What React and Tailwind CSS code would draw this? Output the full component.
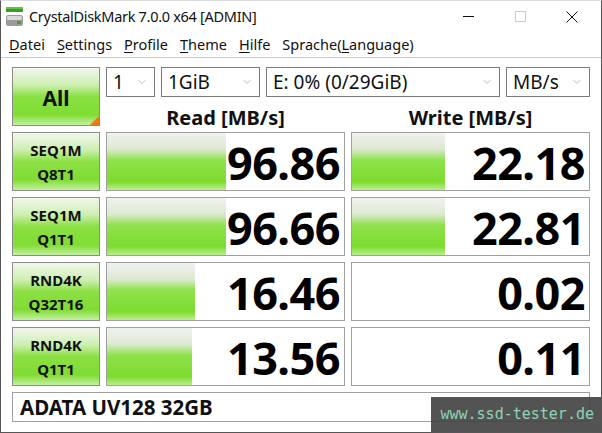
import { ChevronDown } from 'lucide-react'

const rows = [
  { a: 'SEQ1M', b: 'Q8T1', read: '96.86', rw: 119, write: '22.18', ww: 93 },
  { a: 'SEQ1M', b: 'Q1T1', read: '96.66', rw: 119, write: '22.81', ww: 93 },
  { a: 'RND4K', b: 'Q32T16', read: '16.46', rw: 88, write: '0.02', ww: 0 },
  { a: 'RND4K', b: 'Q1T1', read: '13.56', rw: 85, write: '0.11', ww: 0 },
]

const font = { fontFamily: '"Noto Sans", "Open Sans", sans-serif' }

function Btn({ children, className = '' }) {
  return (
    <div className={`relative border border-[#8c8c8c] bg-[linear-gradient(to_bottom,#f2f7ee_0%,#cdeeb0_30%,#8be043_50%,#80dc33_82%,#c3f0a0_100%)] flex flex-col items-center justify-center text-[#111] font-bold ${className}`}>
      {children}
    </div>
  )
}

function Cell({ value, width }) {
  return (
    <div className="relative border border-[#a0a0a0] bg-white h-[59px] flex items-center justify-end pr-[4px]">
      {width > 0 && (
        <div
          className="absolute left-0 top-0 bottom-0 bg-[linear-gradient(to_bottom,#f0f2ee_0%,#dde9d2_28%,#8ee24a_48%,#7edb2f_85%,#b9ee8e_100%)]"
          style={{ width }}
        />
      )}
      <span className="relative text-[45px] font-bold leading-none text-black tracking-[-0.5px] translate-y-[1px]">{value}</span>
    </div>
  )
}

function Combo({ w, label }) {
  return (
    <div className={`${w} h-[30px] border border-[#7a7a7a] bg-white flex items-center justify-between pl-[6px] pr-[6px]`}>
      <span className="text-[19px] text-[#111] leading-none">{label}</span>
      <ChevronDown size={12} strokeWidth={1.2} className="text-[#888]" />
    </div>
  )
}

const U = ({ c }) => <span className="underline underline-offset-2 decoration-1">{c}</span>

export default function App() {
  return (
    <div className="relative w-[602px] h-[433px] bg-white border border-[#555] border-t-[#ddd] overflow-hidden" style={font}>
      {/* title bar */}
      <div className="h-[31px] flex items-center">
        <svg width="20" height="22" viewBox="0 0 20 22" className="ml-[4px] mr-[4px]">
          <rect x="1" y="1" width="17" height="5" fill="#3c9b2a" />
          <rect x="1" y="1" width="17" height="2" fill="#5cc43e" />
          <rect x="1" y="9" width="17" height="11" rx="2.5" fill="#9a9a9a" />
          <rect x="2" y="10" width="15" height="4" rx="1.5" fill="#d8d8d8" />
          <rect x="12" y="15" width="4" height="3" fill="#3fa52b" />
        </svg>
        <span className="text-[14.5px] text-[#111] tracking-[-0.3px]">CrystalDiskMark 7.0.0 x64 [ADMIN]</span>
        <div className="ml-auto flex items-center h-full">
          <div className="w-[46px] flex justify-center"><div className="w-[11px] h-px bg-[#111]" /></div>
          <div className="w-[46px] flex justify-center ml-[6px]"><div className="w-[11px] h-[11px] border border-[#ccc]" /></div>
          <div className="w-[46px] flex justify-center ml-[6px] mr-[6px]">
            <svg width="12" height="12" viewBox="0 0 12 12"><path d="M0.5 0.5L11.5 11.5M11.5 0.5L0.5 11.5" stroke="#111" strokeWidth="1" /></svg>
          </div>
        </div>
      </div>
      {/* menu */}
      <div className="h-[26px] flex items-center text-[14.5px] text-[#111] border-b border-[#c8c8c8] pl-[8px] gap-[12px]">
        <span><U c="D" />atei</span>
        <span><U c="S" />ettings</span>
        <span><U c="P" />rofile</span>
        <span><U c="T" />heme</span>
        <span><U c="H" />ilfe</span>
        <span>Sprache(<U c="L" />anguage)</span>
      </div>
      {/* body */}
      <div className="pl-[11px] pt-[9px] grid grid-cols-[88px_239px_239px] gap-[6px]">
        <Btn className="h-[59px] text-[21px]">
          <span className="translate-y-[2px]">All</span>
          <div className="absolute right-0 bottom-0 w-0 h-0 border-l-[9px] border-l-transparent border-b-[9px] border-b-[#f07818]" />
        </Btn>
        <div className="col-span-2 flex flex-col">
          <div className="flex gap-[6px]">
            <Combo w="w-[49px]" label="1" />
            <Combo w="w-[99px]" label="1GiB" />
            <Combo w="w-[234px]" label="E: 0% (0/29GiB)" />
            <Combo w="w-[84px]" label="MB/s" />
          </div>
          <div className="flex flex-1 items-end translate-y-[4px]">
            <div className="w-[239px] text-center text-[20px] leading-[24px] font-bold text-[#111]">Read [MB/s]</div>
            <div className="w-[239px] ml-[6px] text-center text-[20px] leading-[24px] font-bold text-[#111]">Write [MB/s]</div>
          </div>
        </div>
        {rows.map((r, i) => (
          <div key={i} className="contents">
            <Btn className="h-[59px] text-[15px] leading-[24px]">
              <span>{r.a}</span>
              <span>{r.b}</span>
            </Btn>
            <Cell value={r.read} width={r.rw} />
            <Cell value={r.write} width={r.ww} />
          </div>
        ))}
        <div className="col-span-3 h-[30px] border border-[#a0a0a0] flex items-center pl-[7px] text-[20.5px] font-bold text-[#111]">
          ADATA UV128 32GB
        </div>
      </div>
      {/* watermark */}
      <div className="absolute right-0 bottom-0 w-[170px] h-[35px] bg-[#404040]/90 flex items-center justify-end pr-[7px]">
        <span className="text-[15px] text-[#8fd4b4]" style={{ fontFamily: '"DejaVu Sans Mono", monospace' }}>www.ssd-tester.de</span>
      </div>
    </div>
  )
}
